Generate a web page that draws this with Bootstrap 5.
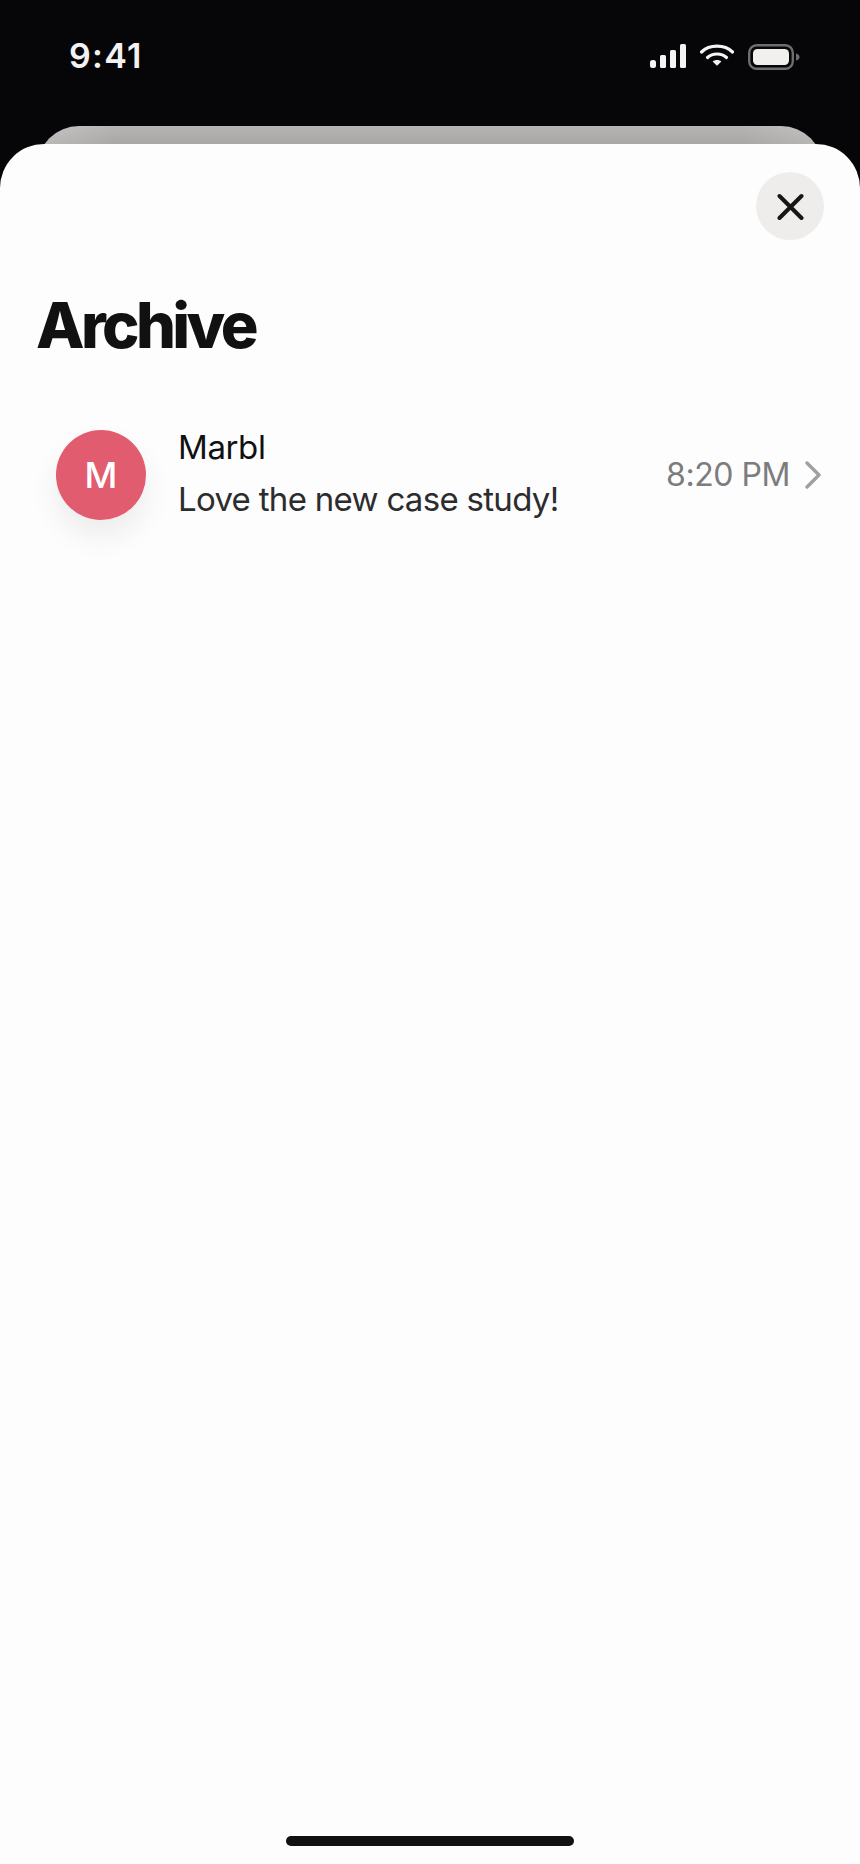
<!DOCTYPE html>
<html lang="en">
<head>
<meta charset="utf-8">
<title>Archive</title>
<link href="https://cdn.jsdelivr.net/npm/bootstrap@5.3.0/dist/css/bootstrap.min.css" rel="stylesheet">
<style>
html,body{margin:0;background:#060609;font-family:Inter,"Liberation Sans",sans-serif}
.screen{width:860px;height:1864px;overflow:hidden;background:#060609}
.statusbar{height:126px;padding:36px 60px 0 69px;color:#f2f2f2}
.clock{font-size:34px;font-weight:600;line-height:40px;letter-spacing:1.3px}
.status-icons{gap:14px;padding-top:8px}
.backcard{height:70px;margin:0 37px -52px;border-radius:42px 42px 0 0;background:linear-gradient(90deg,rgba(255,255,255,.22) 0,rgba(255,255,255,0) 10%,rgba(255,255,255,0) 90%,rgba(255,255,255,.18) 100%),linear-gradient(180deg,#b6b5b3 0,#a6a5a3 30%)}
.sheet{position:relative;border-radius:44px 44px 0 0;background:#fdfdfd;padding:28px 36px 0 36px;min-height:0}
.closebtn{width:68px;height:68px;padding:0;border:0;background:#eeedec}
.sheet-title{font-size:63px;font-weight:800;letter-spacing:-3.6px;line-height:70px;color:#111;margin:50px 0 0 0}
.msgrow{padding:63px 3px 0 20px;gap:32px}
.avatar{width:90px;height:90px;background:#e05c6e;color:#fff;font-size:36px;font-weight:500;box-shadow:0 16px 30px rgba(0,0,0,.07);flex:none}
.msg-name{font-size:33px;line-height:48px;color:#111;letter-spacing:-.4px}
.msg-text{font-size:33px;line-height:56px;color:#2c2c2e;letter-spacing:-.7px}
.msg-time{font-size:32px;color:#7c7c7e;line-height:40px;letter-spacing:-.45px}
.timegroup{gap:15px}
.homebar{width:288px;height:10px;background:#111;border-radius:5px;margin-bottom:18px}
</style>
</head>
<body>
<div class="screen d-flex flex-column">
  <div class="statusbar d-flex justify-content-between align-items-start">
    <div class="clock">9:41</div>
    <div class="status-icons d-flex align-items-start">
      <svg width="36" height="24" viewBox="0 0 36 24" fill="#f4f4f4"><rect x="0" y="16" width="6" height="8" rx="2.5"/><rect x="10" y="11" width="6" height="13" rx="1.5"/><rect x="20" y="6" width="6" height="18" rx="1.5"/><rect x="30" y="0" width="6" height="24" rx="1.5"/></svg>
      <svg width="34" height="22" viewBox="0 0 34 22"><g fill="none" stroke="#f4f4f4" stroke-width="3.2" stroke-linecap="round"><path d="M1.5 8C9.5 .2 24.5 .2 32.5 8"/><path d="M7.5 13.5C12.5 8.8 21.5 8.8 26.5 13.5"/></g><path d="M12.6 17.6C15.2 15.6 18.8 15.6 21.4 17.6L17 21.8Z" fill="#f4f4f4"/></svg>
      <svg width="52" height="26" viewBox="0 0 52 26"><rect x="1.2" y="1.2" width="43.6" height="23.6" rx="7.5" fill="none" stroke="#6e6e6e" stroke-width="2.4"/><rect x="5" y="5" width="36" height="16" rx="4.5" fill="#f2f0ef"/><path d="M48 9.5C50.5 10 51.5 11.5 51.5 13S50.5 16 48 16.5Z" fill="#6e6e6e"/></svg>
    </div>
  </div>
  <div class="backcard flex-shrink-0"></div>
  <main class="sheet flex-grow-1 d-flex flex-column">
    <div class="d-flex justify-content-end">
      <button type="button" class="closebtn btn rounded-circle d-flex align-items-center justify-content-center" aria-label="Close">
        <svg width="28" height="28" viewBox="0 0 28 28" fill="none" stroke="#161616" stroke-width="4" stroke-linecap="round"><path d="M3.5 4 25.5 26M25.5 4 3.5 26"/></svg>
      </button>
    </div>
    <h1 class="sheet-title">Archive</h1>
    <div class="msgrow d-flex align-items-center">
      <div class="avatar rounded-circle d-flex align-items-center justify-content-center">M</div>
      <div class="flex-grow-1">
        <div class="msg-name">Marbl</div>
        <div class="msg-text">Love the new case study!</div>
      </div>
      <div class="timegroup d-flex align-items-center">
        <span class="msg-time">8:20 PM</span>
        <svg width="16" height="28" viewBox="0 0 16 28" fill="none" stroke="#a0a0a0" stroke-width="3.4" stroke-linecap="round" stroke-linejoin="round"><path d="M2 2 14 14 2 26"/></svg>
      </div>
    </div>
    <div class="homebar mt-auto align-self-center"></div>
  </main>
</div>
</body>
</html>
